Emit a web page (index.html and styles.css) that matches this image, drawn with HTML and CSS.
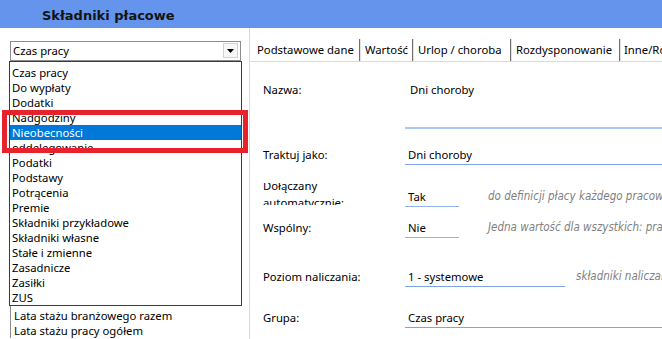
FILE: index.html
```html
<!DOCTYPE html>
<html lang="pl">
<head>
<meta charset="utf-8">
<title>Składniki płacowe</title>
<link rel="stylesheet" href="styles.css">
</head>
<body>
<header class="topbar"><h1 class="title">Składniki płacowe</h1></header>
<div class="main">
  <aside class="left">
    <div class="combo">
      <span class="combo-text">Czas pracy</span>
      <span class="combo-btn"><svg width="7" height="4" viewBox="0 0 7 4"><path d="M0 0H7L3.5 4Z" fill="#000"/></svg></span>
    </div>
    <ul class="dropdown">
      <li>Czas pracy</li>
      <li>Do wypłaty</li>
      <li>Dodatki</li>
      <li>Nadgodziny</li>
      <li class="sel">Nieobecności</li>
      <li>oddelegowanie</li>
      <li>Podatki</li>
      <li>Podstawy</li>
      <li>Potrącenia</li>
      <li>Premie</li>
      <li>Składniki przykładowe</li>
      <li>Składniki własne</li>
      <li>Stałe i zmienne</li>
      <li>Zasadnicze</li>
      <li>Zasiłki</li>
      <li>ZUS</li>
    </ul>
    <ul class="under">
      <li>Lata stażu branżowego razem</li>
      <li>Lata stażu pracy ogółem</li>
    </ul>
    <div class="highlight"></div>
  </aside>
  <section class="right">
    <nav class="tabs">
      <div class="tab tab-active">Podstawowe dane</div>
      <div class="tab tab-2">Wartość</div>
      <div class="tab tab-3">Urlop / choroba</div>
      <div class="tab tab-4">Rozdysponowanie</div>
      <div class="tab tab-5">Inne/Rozliczenia</div>
    </nav>
    <div class="panel">
      <div class="row row-1">
        <div class="label">Nazwa:</div>
        <div class="field field-name">Dni choroby</div>
      </div>
      <div class="row row-2">
        <div class="label">Traktuj jako:</div>
        <div class="field field-wide">Dni choroby</div>
      </div>
      <div class="row row-3">
        <div class="label label-clip"><span class="label-inner">Dołączany automatycznie:</span></div>
        <div class="field field-short">Tak</div>
        <div class="hint hint-far">do definicji płacy każdego pracownika</div>
      </div>
      <div class="row row-4">
        <div class="label">Wspólny:</div>
        <div class="field field-short">Nie</div>
        <div class="hint hint-far">Jedna wartość dla wszystkich: pracowników</div>
      </div>
      <div class="row row-5">
        <div class="label">Poziom naliczania:</div>
        <div class="field field-mid">1 - systemowe</div>
        <div class="hint hint-near">składniki naliczane automatycznie</div>
      </div>
      <div class="row row-6">
        <div class="label">Grupa:</div>
        <div class="field field-wide">Czas pracy</div>
      </div>
    </div>
  </section>
</div>
</body>
</html>
```

FILE: styles.css
```css
* { box-sizing: border-box; margin: 0; padding: 0; }
html, body { width: 662px; height: 339px; overflow: hidden; background: #fff; }
body { font-family: "Noto Sans", "Open Sans", sans-serif; font-size: 11.3px; color: #000; }

.topbar { height: 28px; background: #6494ec; display: flex; align-items: center; padding-left: 42px; padding-top: 3px; }
.title { font-family: "DejaVu Sans", sans-serif; font-weight: bold; font-size: 13px; color: #141414; }

.main { display: flex; height: 311px; }

.left { position: relative; width: 249px; flex: none; padding-top: 13px; }
.combo { margin-left: 10px; width: 231px; height: 20px; border: 1px solid #8c8c8c; display: flex; align-items: center; justify-content: space-between; padding-left: 2px; }
.combo-text { line-height: 18px; }
.combo-btn { width: 15px; height: 15px; margin-right: 2px; margin-top: -1px; border: 1px solid #d2d2d2; background: #f7f7f7; display: flex; align-items: center; justify-content: center; }
.dropdown { list-style: none; margin-left: 9px; width: 233px; border: 1px solid #3c3c3c; padding-top: 3px; line-height: 15px; }
.dropdown li { padding-left: 2px; height: 15px; white-space: nowrap; }
.dropdown li.sel { background: #0078d7; color: #fff; }
.under { list-style: none; margin-left: 10px; border-left: 1px solid #8c8c8c; padding-top: 2px; line-height: 15px; }
.under li { padding-left: 3px; white-space: nowrap; }
.highlight { position: absolute; left: 2px; top: 82px; width: 246px; height: 43px; border: 5px solid #e8222c; }

.right { flex: 1; min-width: 0; display: flex; flex-direction: column; padding-top: 11px; border-left: 1px solid #d9d9d9; }
.tabs { display: flex; height: 23px; border-bottom: 1px solid #dadada; }
.tab { flex: none; line-height: 22px; white-space: nowrap; padding-left: 5px; border-right: 1px solid #6f6f6f; box-shadow: 1px 0 0 #e2e2e2; overflow: hidden; }
.tab-active { width: 110px; padding-left: 7px; }
.tab-2 { width: 53px; }
.tab-3 { width: 98px; }
.tab-4 { width: 109px; }
.tab-5 { width: 80px; padding-left: 4px; }

.panel { flex: 1; display: flex; flex-direction: column; padding-left: 13px; }
.row { display: flex; align-items: flex-start; }
.label { width: 142px; flex: none; line-height: 19px; white-space: nowrap; }
.field { flex: none; line-height: 19px; height: 20px; padding-left: 3px; border-bottom: 1px solid #7ea3e9; white-space: nowrap; }
.field-name { flex: 1; height: 49px; padding-left: 5px; border-bottom: 2px solid #abc7f4; }
.field-wide { flex: 1; }
.field-short { width: 54px; border-bottom-color: #93b3ee; }
.field-mid { width: 160px; }
.hint { flex: none; font-family: "DejaVu Sans Condensed", "DejaVu Sans", sans-serif; font-stretch: condensed; font-style: italic; font-size: 11.5px; color: #808080; line-height: 19px; white-space: nowrap; }
.hint-far { margin-left: 29px; }
.hint-near { margin-left: 11px; }

.label-clip { height: 22px; margin-top: -4px; overflow: hidden; line-height: 17px; white-space: normal; }
.label-inner { display: block; margin-top: -6px; width: 100px; }

.row-1 { margin-top: 18px; }
.row-2 { margin-top: 16px; }
.row-3 { margin-top: 22px; }
.row-4 { margin-top: 11px; }
.row-5 { margin-top: 29px; }
.row-6 { margin-top: 21px; }
```
